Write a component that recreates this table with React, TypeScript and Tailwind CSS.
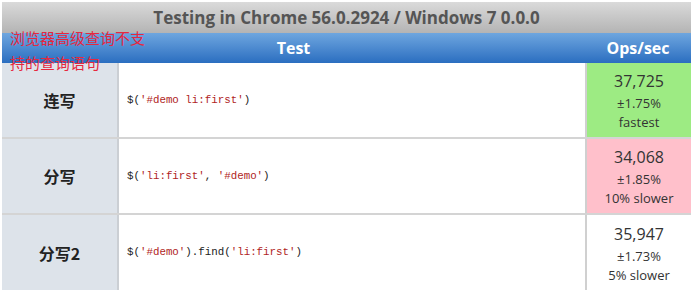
import React from "react";

type Row = {
  label: string;
  code: React.ReactNode;
  ops: string;
  rme: string;
  note: string;
  bg: string;
};

const Str = ({ children }: { children: React.ReactNode }) => (
  <span className="text-[#b01e1e]">{children}</span>
);

const rows: Row[] = [
  {
    label: "连写",
    code: (
      <>
        $(<Str>'#demo li:first'</Str>)
      </>
    ),
    ops: "37,725",
    rme: "±1.75%",
    note: "fastest",
    bg: "bg-[#9deb83]",
  },
  {
    label: "分写",
    code: (
      <>
        $(<Str>'li:first'</Str>, <Str>'#demo'</Str>)
      </>
    ),
    ops: "34,068",
    rme: "±1.85%",
    note: "10% slower",
    bg: "bg-[#ffc0cb]",
  },
  {
    label: "分写2",
    code: (
      <>
        $(<Str>'#demo'</Str>).find(<Str>'li:first'</Str>)
      </>
    ),
    ops: "35,947",
    rme: "±1.73%",
    note: "5% slower",
    bg: "bg-white",
  },
];

export default function App() {
  return (
    <div className="relative w-[699px] h-[298px] bg-white font-['Open_Sans',sans-serif] overflow-hidden">
      <div className="ml-[2px] pt-[2px] w-[689px]">
        {/* title */}
        <div className="h-[31px] flex items-center justify-center bg-gradient-to-b from-[#dadada] to-[#b4b4b4] text-[#555] font-bold text-[17px]">
          Testing in Chrome 56.0.2924 / Windows 7 0.0.0
        </div>

        {/* header */}
        <div className="h-[30px] flex bg-gradient-to-b from-[#6ea6df] to-[#2a6ec0] text-white font-bold text-[16px]">
          <div className="flex-1 flex items-center justify-center">Test</div>
          <div className="w-[106px] flex items-center justify-center">Ops/sec</div>
        </div>

        {rows.map((row, i) => (
          <div
            key={row.label}
            className={`flex ${i < rows.length - 1 ? "h-[76px] border-b-2 border-[#d4d4d4]" : "h-[75px]"}`}
          >
            <div className="w-[117px] flex items-center justify-center bg-[#dde3ea] border-r-2 border-[#cbcfd4] font-['Noto_Sans_CJK_SC',sans-serif] font-bold text-[16px] text-[#222]">
              {row.label}
            </div>
            <div className="flex-1 flex items-center pl-[8px] font-['Liberation_Mono',monospace] text-[10.8px] text-[#222]">
              <code className="whitespace-pre">{row.code}</code>
            </div>
            <div
              className={`w-[106px] flex flex-col items-center justify-center border-l-2 border-[#d0d0d0] text-[#333] ${row.bg}`}
            >
              <div className="text-[16px] leading-[22px]">{row.ops}</div>
              <div className="text-[13px] leading-[22px]">{row.rme}</div>
              <div className="text-[13px] leading-[16px]">{row.note}</div>
            </div>
          </div>
        ))}
      </div>

      {/* annotation overlay */}
      <div className="absolute left-[10px] top-[25px] text-[15px] leading-[25px] text-[#e6283e] font-['Noto_Sans_CJK_SC',sans-serif]">
        <div>浏览器高级查询不支</div>
        <div>持的查询语句</div>
      </div>
    </div>
  );
}
